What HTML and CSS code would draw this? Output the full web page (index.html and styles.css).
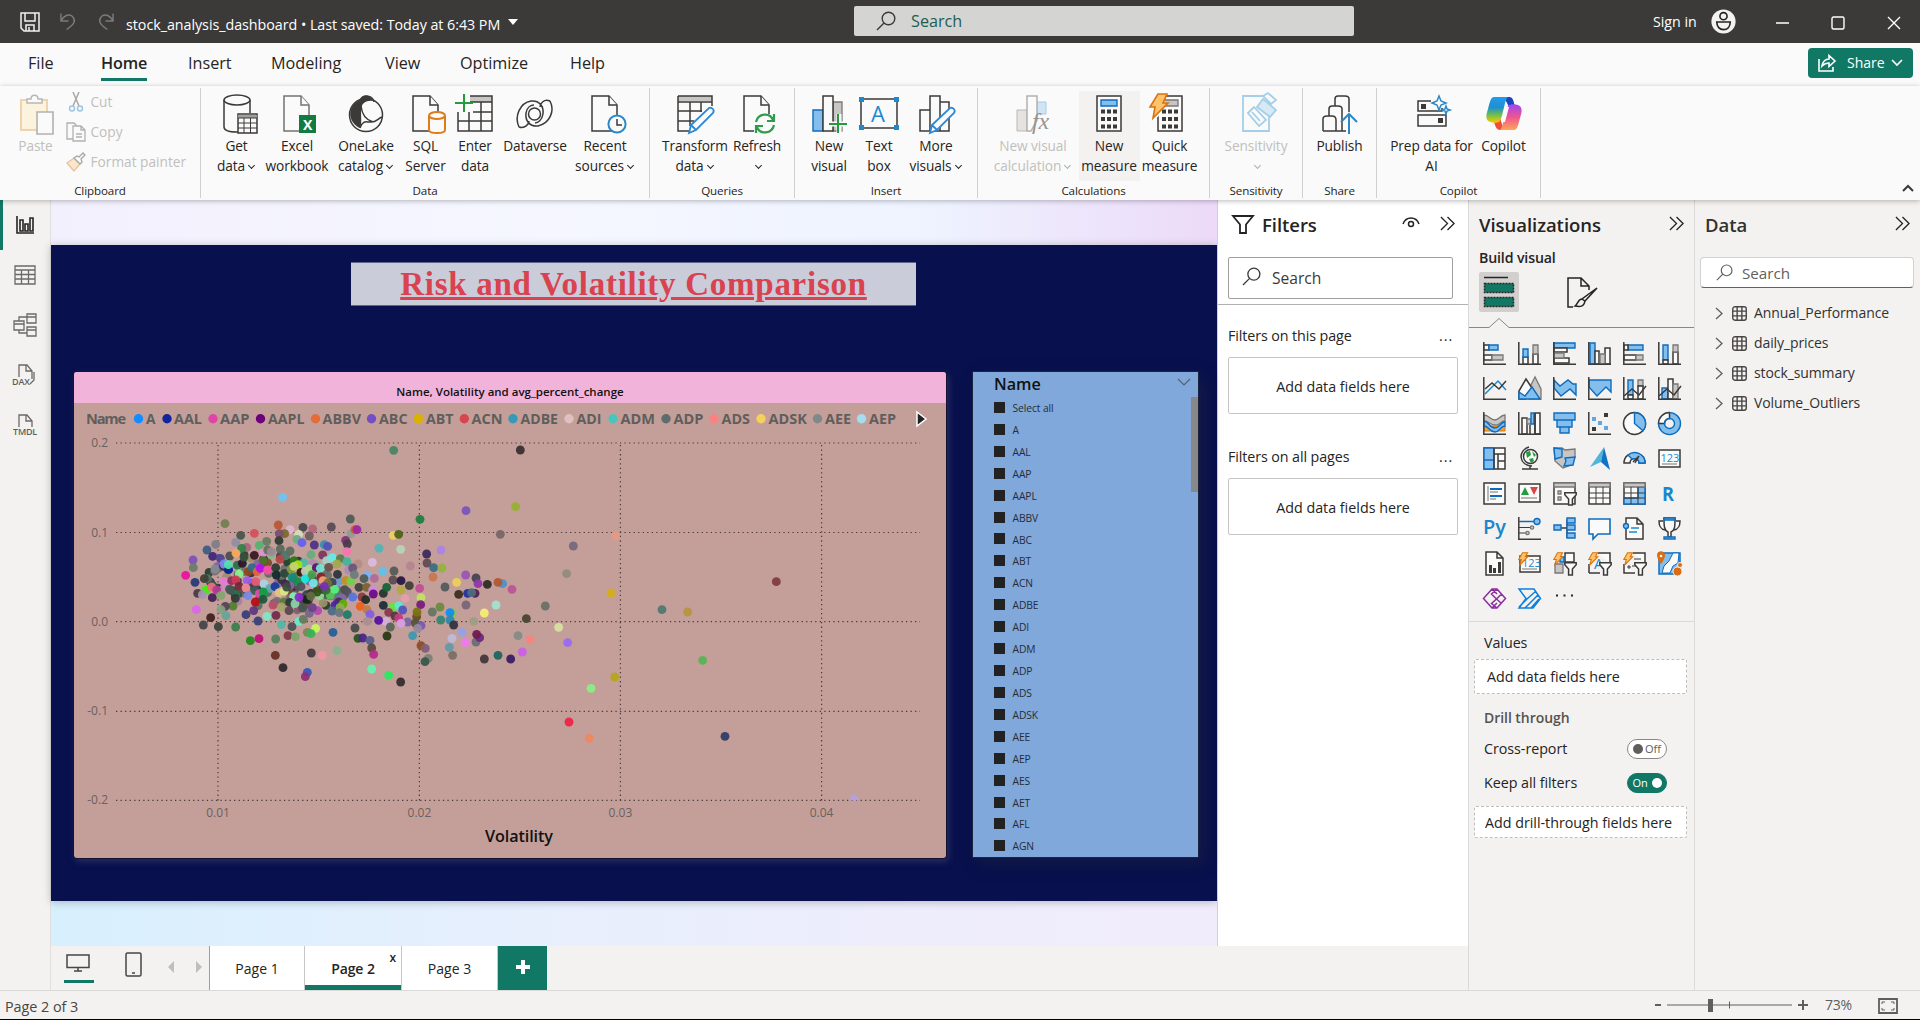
FILE: index.html
```html
<!DOCTYPE html>
<html lang="en">
<head>
<meta charset="utf-8">
<title>stock_analysis_dashboard</title>
<link rel="stylesheet" href="styles.css">
</head>
<body>
<svg class="defs" width="0" height="0">
  <symbol id="mag" viewBox="0 0 20 20"><circle cx="12.5" cy="7.5" r="6.3"/><path d="M8 12L1 19"/></symbol>
  <symbol id="dbl" viewBox="0 0 16 16"><path d="M1 1l7 7-7 7M8 1l7 7-7 7"/></symbol>
  <symbol id="doc" viewBox="0 0 36 40"><path class="w" d="M5 2h17l8 9v26H5z"/><path class="w" d="M22 2v9h8"/></symbol>
  <symbol id="bolt" viewBox="0 0 12 15"><path d="M5 .6h5.4L8 5h2.8L2 14l1.6-6H.8z" fill="#ffc36b" stroke="#d9730d" stroke-width="1.2"/></symbol>
  <symbol id="ax" viewBox="0 0 23 23"><path class="k" d="M.8 0v22.2H23"/></symbol>
  <symbol id="fun" viewBox="0 0 13 14"><path class="w" d="M.8.8h11.4v2L8.4 7v6H4.6V7L.8 2.8z"/></symbol>
  <symbol id="tbl" viewBox="0 0 14 14"><rect x=".7" y=".7" width="12.6" height="12.6" rx="2"/><path d="M.7 4.8h12.6M.7 9.2h12.6M4.8.7v12.6M9.2.7v12.6"/></symbol>
</svg>

<header class="titlebar">
  <svg class="ti save" viewBox="0 0 20 20"><path d="M1 1h18v18H4l-3-3zM5 1v8h10V1M6 19v-6h8v6M9 15v4"/></svg>
  <svg class="ti dim undo" viewBox="0 0 18 19"><path d="M1 1v8h8M1 9c3-6 8-8 12-5 4 4 3 8-6 14"/></svg>
  <svg class="ti dim redo" viewBox="0 0 18 19"><path d="M17 1v8H9M17 9C14 3 9 1 5 4c-4 4-3 8 6 14"/></svg>
  <span class="doc-name">stock_analysis_dashboard • Last saved: Today at 6:43 PM</span>
  <i class="caret"></i>
  <div class="top-search"><svg class="ln"><use href="#mag"/></svg><span>Search</span></div>
  <span class="signin">Sign in</span>
  <svg class="avatar" viewBox="0 0 26 26"><circle cx="13" cy="13" r="12.6" fill="#f3f2f1"/><g fill="none" stroke="#252423" stroke-width="1.7"><circle cx="13" cy="7.5" r="3.7"/><path d="M6 13.5h14c0 5-3 8-7 8s-7-3-7-8z"/></g></svg>
  <svg class="win" viewBox="0 0 124 14"><path d="M0 7h13M112 1l12 12M124 1l-12 12"/><rect x="56" y="1" width="12" height="12" rx="1.5"/></svg>
</header>

<nav class="menu">
  <span style="width:73px">File</span><span style="width:87px" class="on"><b>Home</b></span><span style="width:83px">Insert</span><span style="width:114px">Modeling</span><span style="width:75px">View</span><span style="width:110px">Optimize</span><span>Help</span>
  <button class="share"><svg viewBox="0 0 20 18"><path d="M2 5v12h14v-4M5 12c1-5 4-7 7-7V1.500l6 5.500-6 5.500V9c-3 0-5 1-7 3z"/></svg>Share<svg class="chev" viewBox="0 0 12 8"><path d="M1 1l5 5 5-5"/></svg></button>
</nav>

<section class="ribbon">
  <div class="group clip">
    <div class="btns">
      <div class="btn off"><svg viewBox="0 0 36 40"><path d="M3 6h26v30H3z" fill="#fcf3df" stroke="#eed3ae" stroke-width="2"/><path d="M9 9V5h4c0-5 7-5 7 0h4v4z" fill="#fafafa" stroke="#b9b7b5" stroke-width="1.500"/><path d="M19 18h16v22H19z" fill="#fafafa" stroke="#b3b1af" stroke-width="1.600"/></svg>Paste</div>
      <ul class="small">
        <li><svg viewBox="0 0 20 20"><path d="M7 0l6 14M13 0L7 14" stroke="#a9a7a5" fill="none" stroke-width="1.500"/><circle cx="6" cy="16.500" r="2.500" fill="none" stroke="#9cc6e4" stroke-width="1.500"/><circle cx="14" cy="16.500" r="2.500" fill="none" stroke="#9cc6e4" stroke-width="1.500"/></svg>Cut</li>
        <li><svg viewBox="0 0 20 20" fill="#fafafa" stroke="#b3b1af" stroke-width="1.300"><path d="M1 1h7l3 3v13H1z"/><path d="M7 4h8l4 4v11H7zM15 4v4h4M10 12h6M10 15h6"/></svg>Copy</li>
        <li><svg viewBox="0 0 20 20" stroke-width="1.300"><path d="M1 11l7-5 6 6-6 7z" fill="#fbe6cd" stroke="#e5c49c"/><path d="M8 6l3-2 2 1 4-4 2 2-4 4 1 3-2 2z" fill="#fafafa" stroke="#a9a7a5"/></svg>Format painter</li>
      </ul>
    </div><h6>Clipboard</h6>
  </div>
  <div class="group" style="width:449px">
    <div class="btns">
      <div class="btn" style="width:57px"><svg viewBox="0 0 36 40"><path class="w" d="M5 6v27c0 3 5 5 13 5h5M31 19V6"/><ellipse class="w" cx="18" cy="6" rx="13" ry="5"/><path class="w" d="M19 20h19v19H19z"/><path d="M19 21h19v3H19z" fill="#a19f9d"/><path class="k th" d="M19 24h19M19 29h19M19 34h19M25 24v15M31.500 24v15"/></svg>Get<br>data<i></i></div>
      <div class="btn" style="width:64px"><svg viewBox="0 0 36 40"><g class="soft"><use href="#doc"/></g><path d="M20 21h17v18H20z" fill="#107c41"/><text x="24" y="35.500" fill="#fff" font-size="14" font-weight="700">X</text></svg>Excel<br>workbook</div>
      <div class="btn" style="width:74px"><svg viewBox="0 0 36 40"><circle class="k" cx="18" cy="21" r="16.500"/><path d="M12 6c4-7 11-5 13 1-6-1-12 2-12 9 0 8 1 14-1 18C0 29-2 12 12 6z" fill="#3b3a39"/><path class="k" d="M12 6c4-7 13-4 14 2M13 12c1 9 5 14 12 16M12 34c3-8 6-6 10-6 6 1 7-3 12-5"/></svg>OneLake<br>catalog<i></i></div>
      <div class="btn" style="width:45px"><svg viewBox="0 0 36 40"><use href="#doc"/><path d="M21 22v14c0 4 16 4 16 0V22" fill="#fafafa" stroke="#e07b1a" stroke-width="2"/><ellipse cx="29" cy="21.500" rx="8" ry="3.500" fill="#fafafa" stroke="#e07b1a" stroke-width="2"/></svg>SQL<br>Server</div>
      <div class="btn" style="width:54px"><svg viewBox="0 0 36 40"><path d="M13 2h22v6H13z" fill="#c8c6c4"/><path class="k" d="M13 2h22v35H1V18M13 8h22M16 18h19M1 27h34M12 18v19M24 8v29"/><path d="M7 0v18M-2 9h18" stroke="#259b3e" stroke-width="2"/></svg>Enter<br>data</div>
      <div class="btn" style="width:66px"><svg viewBox="0 0 36 40"><g class="k"><circle cx="17.500" cy="20" r="6"/><path d="M33 7c-6-3-10 3-10 6M33 7c5 10 0 22-12 25-8 1-13-5-12-13 1-6 5-8 8-8M2 33c6 2 10-3 10-6M2 33C-3 22 3 9 14 7c8-1 13 5 12 13-1 6-5 9-8 9"/></g></svg>Dataverse</div>
      <div class="btn" style="width:74px"><svg viewBox="0 0 36 40"><use href="#doc"/><circle cx="30" cy="30" r="8.600" fill="#fafafa" stroke="#2b88c8" stroke-width="2"/><path class="k" d="M30 25v6h5"/></svg>Recent<br>sources<i></i></div>
    </div><h6>Data</h6>
  </div>
  <div class="group" style="width:145px">
    <div class="btns">
      <div class="btn" style="width:70px"><svg viewBox="0 0 36 40"><path d="M1 2h34v5H1z" fill="#c8c6c4"/><path class="k" d="M1 2h34v10M1 2v35h11M1 8h34M1 17h24M1 27h16M13 8v24M24 8v10"/><path class="pen" d="M12 39l2-8 18-17c3-1 6 2 4 5L19 36zM14 31l5 5"/></svg>Transform<br>data<i></i></div>
      <div class="btn" style="width:54px"><svg viewBox="0 0 36 40"><use href="#doc"/><path d="M15 20h24v22H15z" fill="#fafafa"/><path d="M17 28c2-9 14-10 17-2M35 20v7h-7M35 31c-2 9-14 10-17 2M17 39v-7h7" fill="none" stroke="#2f9b4c" stroke-width="2.200"/></svg>Refresh<br><i></i></div>
    </div><h6>Queries</h6>
  </div>
  <div class="group" style="width:183px">
    <div class="btns">
      <div class="btn" style="width:56px"><svg viewBox="0 0 36 40"><path class="b" d="M2 16h10v21H2z"/><path class="g" d="M22 8h9v29h-9z"/><path class="w" d="M12 2h10v35H12z"/><path d="M18 30h20M28 20v20" stroke="#fafafa" stroke-width="5"/><path d="M18 30h18M27 20v19" stroke="#259b3e" stroke-width="2"/></svg>New<br>visual</div>
      <div class="btn" style="width:44px"><svg viewBox="0 0 36 40"><path class="k" d="M0 5h36v29H0z"/><path d="M-2 3h5v5h-5zM33 3h5v5h-5zM-2 31h5v5h-5zM33 31h5v5h-5z" fill="#1a8ad0"/><text x="10" y="28" font-size="22" fill="#1a8ad0">A</text></svg>Text<br>box</div>
      <div class="btn" style="width:70px"><svg viewBox="0 0 36 40"><path class="w" d="M2 16h10v21H2zM22 8h9v29h-9zM12 2h10v35H12z"/><path class="pen" d="M12 39l2-8 18-17c3-1 6 2 4 5L19 36zM14 31l5 5"/></svg>More<br>visuals<i></i></div>
    </div><h6>Insert</h6>
  </div>
  <div class="group" style="width:232px">
    <div class="btns">
      <div class="btn off" style="width:91px"><svg viewBox="0 0 36 40"><path d="M2 16h10v21H2z" fill="#e5e3e1" stroke="#b9b7b5"/><path d="M22 8h9v12h-9z" fill="#cfe4f4" stroke="#a9cce6"/><path d="M12 2h10v24l-6 11h-4z" fill="#fafafa" stroke="#b3b1af" stroke-width="1.500"/><text x="17" y="35" font-size="24" font-family="Liberation Serif" font-style="italic" fill="#979593">fx</text></svg>New visual<br>calculation<i></i></div>
      <div class="btn hot" style="width:61px"><svg viewBox="0 0 36 40"><path class="w" d="M6 2h24v35H6z"/><path class="b" d="M10 6h16v6H10z"/><path d="M10 17.500h16M10 25h16M10 32.500h16" stroke="#3b3a39" stroke-width="4" stroke-dasharray="4 2"/></svg>New<br>measure</div>
      <div class="btn" style="width:60px"><svg viewBox="0 0 36 40"><path class="w" d="M6 2h24v35H6z"/><path class="g" d="M10 6h16v6H10z"/><path d="M10 17.500h16M10 25h16M10 32.500h16" stroke="#3b3a39" stroke-width="4" stroke-dasharray="4 2"/><path d="M6 1H-4v23l10-1 8-14z" fill="#fafafa"/><path d="M6 0h9l-4 9h5L1 24l2-11h-5z" fill="#ffc36b" stroke="#d9730d" stroke-width="1.600"/></svg>Quick<br>measure</div>
    </div><h6>Calculations</h6>
  </div>
  <div class="group" style="width:93px">
    <div class="btns"><div class="btn off" style="width:80px"><svg viewBox="0 0 36 40"><g fill="#fafafa" stroke="#a5cfe8" stroke-width="1.800"><path d="M5 2h26v35H5z"/><path d="M10 19l6-6 12 13-7 6z"/><path d="M19 13l6-8 13 11-6 7z" fill="#d6e9f5"/><path d="M25 2l5-3 8 7-5 4zM14 18l8 9"/></g></svg>Sensitivity<br><i></i></div></div><h6>Sensitivity</h6>
  </div>
  <div class="group" style="width:74px">
    <div class="btns"><div class="btn"><svg viewBox="0 0 36 40"><g class="k"><path d="M2 37V25c0-3 2-3 4-3h5c3 0 4 1 4 4v11M8 22v-7c0-2 1-3 3-3h6c2 0 4 1 4 3v22M14 12V5c0-2 1-3 3-3h7c2 0 4 1 4 3v13M2 37h23"/></g><path d="M28 40V20M20 28l8-8 8 8" fill="none" stroke="#2b88c8" stroke-width="2"/></svg>Publish</div></div><h6>Share</h6>
  </div>
  <div class="group" style="width:164px">
    <div class="btns">
      <div class="btn" style="width:90px"><svg viewBox="0 0 36 40"><path class="k" d="M17 7H4v10h24v-3M4 21h28v11H4z"/><path d="M7 10h5v5H7zM24 24h5v5h-5z" fill="#3b3a39"/><path d="M25 2l2 5 5 2-5 2-2 5-2-5-5-2 5-2zM32 12l1 3 3 1-3 1-1 3-1-3-3-1 3-1z" fill="#fafafa" stroke="#2b88c8" stroke-width="1.500"/></svg>Prep data for<br>AI</div>
      <div class="btn" style="width:54px"><svg viewBox="0 0 36 40"><defs><linearGradient id="ca" x2="0" y2="1"><stop stop-color="#1f9cf0"/><stop offset=".4" stop-color="#1f8fd0"/><stop offset=".7" stop-color="#6fbf4a"/><stop offset="1" stop-color="#ffc800"/></linearGradient><linearGradient id="cb" x2="0" y2="1"><stop stop-color="#a045f0"/><stop offset=".5" stop-color="#ef5590"/><stop offset="1" stop-color="#ffa555"/></linearGradient></defs><path d="M18 3h5c3 0 4 2 5 6l1 4h-6z" fill="#1746c0"/><path d="M18 36h-4c-3 0-5-3-6-9l6-3z" fill="#ee4f35"/><path d="M8 3h14c-4 3-5 22-9 25-2 1-6 1-9 0-5-2-4-7-2-13C4 7 5 3 8 3z" fill="url(#ca)"/><path d="M28 36H14c4-3 5-22 9-25 2-1 6-1 9 0 5 2 4 7 2 13-2 8-3 12-6 12z" fill="url(#cb)"/><path d="M20 13h3l-4 15h-4z" fill="#fafafa"/></svg>Copilot</div>
    </div><h6>Copilot</h6>
  </div>
  <svg class="fold" viewBox="0 0 12 8"><path d="M1 7l5-5 5 5"/></svg>
</section>

<main>
  <aside class="rail">
    <div class="sel"><svg viewBox="0 0 24 24"><path d="M4 3v17h17M7 7h3v11H7zM12 11h3v7h-3zM17 5h3v13h-3z"/></svg></div>
    <div><svg viewBox="0 0 24 24"><path d="M2 3h20v18H2zM2 7h20M2 11.500h20M2 16h20M8.500 7v14M15.500 7v14"/></svg></div>
    <div><svg viewBox="0 0 24 24"><path d="M1 8h10v9H1zM1 11h10M14 1h9v9h-9zM14 4h9M14 14h9v9h-9zM14 17h9M6 8V4h8M6 17v3h8"/></svg></div>
    <div><svg viewBox="0 0 24 24"><path d="M6 14V2h8l5 6v8M13 2v6h6M21 9v8l-4 4"/><text x="-1" y="21.500">DAX</text></svg></div>
    <div><svg viewBox="0 0 24 24"><path d="M6 14V2h8l5 6v6M13 2v6h6"/><text x="0" y="21.500">TMDL</text></svg></div>
  </aside>

  <section class="work">
    <div class="canvas">
      <div class="page">
        <h1>Risk and Volatility Comparison</h1>
        <div class="visuals">
          <article class="scatter">
            <h2>Name, Volatility and avg_percent_change</h2>
            <svg id="chart" viewBox="0 31 872 455" width="872" height="455">
              <g id="legend"></g>
              <path d="M843 40l9 7-9 7z" fill="#222" stroke="#fff" stroke-width="1.500"/>
              <g id="grid"></g>
              <clipPath id="plot"><rect x="40" y="60" width="820" height="368.500"/></clipPath>
              <g clip-path="url(#plot)"><g id="dots" transform="translate(86 118) scale(.33333)"></g></g>
              <text class="axis-title" x="411" y="470" textLength="68">Volatility</text>
            </svg>
          </article>
          <article class="slicer">
            <h3>Name<svg viewBox="0 0 14 8"><path d="M1 1l6 6 6-6"/></svg></h3>
            <ul><li>Select all<li>A<li>AAL<li>AAP<li>AAPL<li>ABBV<li>ABC<li>ABT<li>ACN<li>ADBE<li>ADI<li>ADM<li>ADP<li>ADS<li>ADSK<li>AEE<li>AEP<li>AES<li>AET<li>AFL<li>AGN</ul>
            <i class="thumb"></i>
          </article>
        </div>
      </div>
    </div>
    <aside class="filters">
      <div class="phead"><svg class="funnel" viewBox="0 0 22 19"><path d="M1 1h20l-7 8.500V18H8V9.500z"/></svg><h4>Filters</h4><svg class="eye" viewBox="0 0 18 12"><path d="M1 7c3-8 13-8 16 0"/><circle cx="9" cy="7" r="2.500"/></svg><svg class="dbl"><use href="#dbl"/></svg></div>
      <div class="fsearch"><svg class="ln"><use href="#mag"/></svg>Search</div>
      <section><p>Filters on this page<em>...</em></p><div class="well">Add data fields here</div></section>
      <section><p>Filters on all pages<em>...</em></p><div class="well">Add data fields here</div></section>
    </aside>
    <footer class="tabs">
      <div class="dev"><svg viewBox="0 0 24 18"><path d="M1 1h22v12.500H1zM12 14v3M8 17h8"/></svg></div>
      <svg class="phone" viewBox="0 0 17 25"><rect x="1" y="1" width="15" height="23" rx="1.500"/><path d="M7 21h3"/></svg>
      <i class="pl"></i><i class="pr"></i>
      <span class="tab first">Page 1</span><span class="tab cur">Page 2<u>x</u></span><span class="tab">Page 3</span><span class="add"></span>
    </footer>
  </section>

  <aside class="viz">
    <div class="phead"><h4>Visualizations</h4><svg class="dbl"><use href="#dbl"/></svg></div>
    <h5>Build visual</h5>
    <div class="modes">
      <svg class="tile" viewBox="0 0 40 40"><path d="M5 5.500h24" stroke="#252423" stroke-width="1.500"/><path d="M5.500 11.500h29v9h-29zM5.500 25.500h29v9h-29z" fill="#117865" stroke="#252423" stroke-width="1.500" stroke-dasharray="2 1"/></svg>
      <svg class="fmt" viewBox="0 0 32 32"><path d="M6 30H1V1h13l8 8v4M14 1v8h8M30 11L18 24l-3-2zM15 22c-4 0-4 5-7 7 5 1 9 1 10-5"/></svg>
    </div>
    <svg class="notch" viewBox="0 0 225 10" height="10"><path d="M0 9.500h20l10-9 10 9h185"/></svg>
    <div class="gallery">
      <svg><use href="#ax"/><path class="w" d="M1 3h5v5H1zM1 13h8v5H1z"/><path class="b" d="M6 3h9v5H6z"/><path class="g" d="M9 13h11v5H9z"/></svg>
      <svg><use href="#ax"/><path class="w" d="M5 15h5v7H5zM15 12h5v10h-5z"/><path class="b" d="M5 7h5v8H5z"/><path class="g" d="M15 3h5v9h-5z"/></svg>
      <svg><path class="b" d="M1 1h21v5H1z"/><path class="w" d="M1 6h13v4H1zM1 16h15v5H1z"/><path class="g" d="M1 11h10v5H1z"/><use href="#ax"/></svg>
      <svg><path class="b" d="M2 1h5v21H2z"/><path class="w" d="M7 9h4v13H7zM17 6h5v16h-5z"/><path class="g" d="M12 12h5v10h-5z"/><use href="#ax"/></svg>
      <svg><path class="b" d="M5 3h15v5H5z"/><path class="w" d="M1 3h4v5H1zM1 13h12v5H1z"/><path class="g" d="M13 13h7v5h-7z"/><use href="#ax"/></svg>
      <svg><path class="b" d="M5 3h5v15H5z"/><path class="w" d="M5 18h5v4H5zM15 10h5v12h-5z"/><path class="g" d="M15 3h5v7h-5z"/><use href="#ax"/></svg>

      <svg><use href="#ax"/><path d="M2 17L15 4l8 9" fill="none" stroke="#1a8ad0" stroke-width="1.500"/><path class="k" d="M2 12l7-6 7 6 7-8"/></svg>
      <svg><path class="g" d="M11 12l6-12 6 12v10H11z"/><path class="w" d="M1 14L8 2l8 12-8 8H1z"/><path class="b" d="M1 15l6 4 7-9 8 12H1z"/></svg>
      <svg><path class="b" d="M1 3l6 6 8-6 5 4h3v11l-6-6-9 7-7-8z"/><use href="#ax"/></svg>
      <svg><path class="b" d="M1 3h22v12l-5-5-9 9-8-9z"/><use href="#ax"/></svg>
      <svg><path class="b" d="M5 3h5v15H5z"/><path class="g" d="M15 3h5v6h-5z"/><path class="w" d="M5 18h5v4H5zM15 9h5v13h-5z"/><path class="k" d="M1 19l8-7 7 6 7-9"/><use href="#ax"/></svg>
      <svg><path class="b" d="M4 11h6v11H4z"/><path class="w" d="M10 2h5v20h-5z"/><path class="g" d="M15 7h5v15h-5z"/><path class="k" d="M1 19l8-7 7 6 7-9"/><use href="#ax"/></svg>

      <svg><path class="g" d="M1 3c5 0 6 5 11 5 4 0 5-5 10-5v6c-5 0-5 5-10 4C7 13 6 9 1 9z"/><path d="M1 14h21v5H1z" fill="#f0a03c" stroke="#d9730d"/><path class="b" d="M1 9c5 0 5 7 11 7 5 0 5-6 10-6v4c-5 0-5 6-10 6C6 20 6 14 1 14z"/><use href="#ax"/></svg>
      <svg><path class="w" d="M4 6h5v16H4zM17 1h5v21h-5z"/><path class="g" d="M9 7h4v5H9z"/><path class="b" d="M13 1h3v11h-3z"/><path class="k" d="M12 13v9M17 1v21"/><use href="#ax"/></svg>
      <svg><path class="b" d="M1 1h21v7H1zM4 8h15v7H4zM7 15h9v6H7z"/></svg>
      <svg><use href="#ax"/><path d="M16 1h4v4h-4zM4 15h4v4H4z" fill="#3b3a39"/><path d="M4 5h4v4H4zM10 9h4v4h-4zM16 14h4v4h-4z" fill="#5fa8e3"/></svg>
      <svg><circle class="w" cx="11.500" cy="11.500" r="11"/><path class="b" d="M11.500.7a11 11 0 018.500 18l-8.500-7.200z"/></svg>
      <svg><circle cx="11.500" cy="11.500" r="8.300" fill="none" stroke="#83beec" stroke-width="6"/><path class="w" d="M.5 11.500a11 11 0 0111-11v6a5 5 0 00-5 5z"/><g fill="none" stroke="#0f6cbd" stroke-width="1.400"><path d="M11.500.6a11 11 0 11-11 11"/><circle cx="11.500" cy="11.500" r="5"/></g></svg>

      <svg><path class="w" d="M1 1h21v21H1z"/><path class="b" d="M1 1h10v12H1zM1 13h10v9H1z"/><path class="k" d="M11 7h11M15 7v15M15 14h7M11 1v21"/></svg>
      <svg><circle class="w" cx="12.500" cy="9.500" r="7"/><path d="M8 5l4-1 1 4-4 3zM14 4l4 4-2 2zM11 12l4-1 1 3-3 2z" fill="#259b3e"/><path class="k" d="M11 0C0 3 0 18 14 19M12 19v3M4 22h16"/></svg>
      <svg><path class="g" d="M1 1h8l3 2 10-1v8l-4 8-8 3-8-7z"/><path class="b" d="M1 1l8 1v8l-7 2zM12 11l10-1-2 8-9 1 2-5z"/></svg>
      <svg><path d="M16 0L2 20l11-5z" fill="#50b4dc"/><path d="M16 0l6 23-9-8z" fill="#1273c4"/></svg>
      <svg><path class="w" d="M1 16C1 3 22 3 22 16h-6c0-6-9-6-9 0z"/><path class="b" d="M5 8c6-5 17-2 17 8h-6c0-4-4-5-7-4z"/><path class="k" d="M10 15l6-6-4 7"/></svg>
      <svg><path class="w" d="M1 3h21v17H1z"/><path d="M4 17h15" stroke="#797775"/><text x="2.500" y="14.500" font-size="11" fill="#1a8ad0">123</text></svg>

      <svg><path class="w" d="M1 1h21v21H1z"/><path d="M5 4v15M7 10h8M7 17h6" stroke="#797775"/><path d="M7 7h12M7 14h12" stroke="#0f6cbd" stroke-width="2"/></svg>
      <svg><path class="w" d="M1 2h21v18H1z"/><path d="M3 13l4-8 4 8z" fill="#259b3e"/><path d="M12 5h8l-4 8z" fill="#e04343"/><path d="M3 16h16" stroke="#797775"/></svg>
      <svg><path class="w" d="M1 1h21v21H1z"/><path class="g" d="M1 1h21v4H1zM5 9h3v3H5zM5 15h3v3H5z"/><use href="#fun" x="11" y="10" width="13" height="14"/></svg>
      <svg><path class="w" d="M1 1h21v21H1z"/><path class="g" d="M1 1h21v4H1z"/><path class="k th" d="M1 11h21M1 16h21M8 5v17M15 5v17"/></svg>
      <svg><path class="w" d="M1 1h21v21H1z"/><path class="b" d="M15 5h7v17H1v-6h14z"/><path class="g" d="M1 1h21v4H1z"/><path class="k th" d="M1 11h21M1 16h21M8 5v17M15 5v17"/></svg>
      <svg><text x="4" y="18.500" font-size="19" font-weight="700" fill="#1a86cc" textLength="12" lengthAdjust="spacingAndGlyphs">R</text></svg>

      <svg><text x="0" y="17" font-size="20" font-weight="600" fill="#1a86cc" textLength="23" lengthAdjust="spacingAndGlyphs">Py</text></svg>
      <svg><use href="#ax"/><path d="M1 4.500h15" stroke="#0f6cbd" stroke-width="1.500"/><circle class="b" cx="19" cy="4.500" r="3"/><path class="k th" d="M1 10.500h11M1 16h7"/><circle class="g" cx="14" cy="10.500" r="1.700"/><circle class="g" cx="9.500" cy="16" r="1.700"/></svg>
      <svg><path class="k" d="M8 11h6M20 3h-6v17h5"/><path class="b" d="M1 8h7v5H1zM14 1h8v5h-8zM14 8h8v5h-8zM14 16h8v5h-8z"/></svg>
      <svg><path d="M1 2h21v15H10l-5 5v-5H1z" fill="#fafafa" stroke="#0f6cbd" stroke-width="1.600"/></svg>
      <svg><path class="w" d="M3 1h11l6 6v15H3zM14 1v6h6"/><circle class="b" cx="3" cy="9" r="2.500"/><path d="M8 11h8M6 15h8" stroke="#1a8ad0" stroke-width="1.500"/></svg>
      <svg><path class="w" d="M5 4H1c0 6 2 8 6 9M18 4h4c0 6-2 8-6 9M6 1h11c0 9 0 12-4 14v5h-3v-5C6 13 6 9 6 1z"/><path class="b" d="M6 1h11v2H6zM6 20h11v2H6z"/></svg>

      <svg><path class="w" d="M3 0h11l6 6v17H3zM14 0v6h6"/><path d="M6 13h3v8H6zM10 16h3v5h-3zM15 10h3v11h-3z" fill="#3b3a39"/></svg>
      <svg><path class="w" d="M2 4h20v16H2z"/><path d="M4 17h15" stroke="#797775"/><text x="4" y="15" font-size="11" fill="#1a8ad0">123</text><use href="#bolt" width="11" height="14"/></svg>
      <svg><path class="g" d="M2 12h8v9H2z"/><path class="w" d="M12 1h9v9h-9z"/><path class="b" d="M7 5h4v5H7z"/><use href="#fun" x="11" y="10" width="13" height="14"/><use href="#bolt" width="11" height="14"/></svg>
      <svg><path class="w" d="M1 21h11M1 12v9M10 1h12v10"/><text x="6" y="17" font-size="15" fill="#1a8ad0">A</text><use href="#fun" x="11" y="10" width="13" height="14"/><use href="#bolt" width="11" height="14"/></svg>
      <svg><path class="w" d="M1 12v9h11M10 1h12v10"/><path class="k th" d="M11 7h7M5 14h2v2H5zM9 14h4"/><use href="#fun" x="11" y="10" width="13" height="14"/><use href="#bolt" width="11" height="14"/></svg>
      <svg><path d="M1 1h21v21H1z" fill="#83beec" stroke="#0f6cbd" stroke-width="1.500"/><path d="M15 1l-4 8-5 5-2 7h8l3-7 5-3 1-10z" fill="#fafafa" stroke="#0f6cbd"/><path d="M-1 3c0-5 8-5 8 0 0 4-4 9-4 9s-4-5-4-9z" fill="#dd6b10"/><circle cx="3" cy="4" r="1.300" fill="#fff"/><circle cx="19.500" cy="19.500" r="4.500" fill="#dd6b10" stroke="#f3f2f1"/><circle cx="22" cy="13" r="2.500" fill="#dd6b10" stroke="#f3f2f1"/></svg>

      <svg><g fill="none" stroke="#8a2f9b" stroke-width="1.500"><path d="M9 2h5l8.500 9.500L14 21H9L.5 11.500zM14 2L8.500 7l5 5 5-5M9 2l5 5M13.500 12l-5 4.500L14 21M13.500 12l5 4.500M9 21l5-5"/></g></svg>
      <svg><g fill="none" stroke="#0f7fdc" stroke-width="1.500"><path d="M1 2h15l6.500 9.500L15 21H1l7-9.500zM9 12L18 4M1 20l9-9M7 21L20 8M13 21l8-9"/></g></svg>
      <svg><path d="M3 8.500h2M10.500 8.500h2M18 8.500h2" stroke="#252423" stroke-width="2"/></svg>
    </div>
    <div class="fields">
      <label>Values</label>
      <div class="dash v">Add data fields here</div>
      <label class="sb">Drill through</label>
      <div class="row">Cross-report<span class="tg"><i></i>Off</span></div>
      <div class="row k2">Keep all filters<span class="tg yes">On<i></i></span></div>
      <div class="dash d">Add drill-through fields here</div>
    </div>
  </aside>

  <aside class="data">
    <div class="phead"><h4>Data</h4><svg class="dbl"><use href="#dbl"/></svg></div>
    <div class="dsearch"><svg class="ln"><use href="#mag"/></svg>Search</div>
    <ul>
      <li><svg class="ar" viewBox="0 0 8 12"><path d="M1 .5L7 6l-6 5.500"/></svg><svg class="tb"><use href="#tbl"/></svg>Annual_Performance</li>
      <li><svg class="ar" viewBox="0 0 8 12"><path d="M1 .5L7 6l-6 5.500"/></svg><svg class="tb"><use href="#tbl"/></svg>daily_prices</li>
      <li><svg class="ar" viewBox="0 0 8 12"><path d="M1 .5L7 6l-6 5.500"/></svg><svg class="tb"><use href="#tbl"/></svg>stock_summary</li>
      <li><svg class="ar" viewBox="0 0 8 12"><path d="M1 .5L7 6l-6 5.500"/></svg><svg class="tb"><use href="#tbl"/></svg>Volume_Outliers</li>
    </ul>
  </aside>
</main>

<footer class="status">
  <span class="pg">Page 2 of 3</span>
  <svg class="zoom" viewBox="0 0 154 20" width="154" height="20"><path d="M1 10h6M144 10h10M149 5v10" stroke-width="2"/><path d="M13 10h125M75.500 6.500v7"/><path d="M54 4h5v13h-5z" fill="#605e5c" stroke="none"/></svg>
  <span class="pct">73%</span>
  <svg class="fit" viewBox="0 0 20 16"><path d="M1 1h18v14H1z"/><path d="M4 6V4h3M13 4h3v2M4 10v2h3M13 12h3v-2" stroke-width="1"/></svg>
</footer>
<script src="chart.js"></script>
</body>
</html>
```
FILE: styles.css
```css
* { box-sizing: border-box; margin: 0; padding: 0; }
body {
  width: 1920px; height: 1020px; overflow: hidden;
  display: flex; flex-direction: column;
  font: 13.7px/20px "Open Sans", "Noto Sans", sans-serif;
  color: #252423; background: #f3f2f1;
  border-bottom: 1px solid #000;
}
ul { list-style: none; }
svg { display: block; overflow: visible; flex: none; }
.defs { position: absolute; }
button { font: inherit; border: 0; }

.k { fill: none; stroke: #3b3a39; stroke-width: 1.5; }
.k.th { stroke-width: 1; }
.w { fill: #fafafa; stroke: #3b3a39; stroke-width: 1.5; }
.b { fill: #83beec; stroke: #0f6cbd; stroke-width: 1.4; }
.g { fill: #c8c6c4; stroke: #797775; stroke-width: 1.3; }
.pen { fill: #fafafa; stroke: #2b88d8; stroke-width: 1.8; }
.ln { fill: none; stroke: #3b3a39; stroke-width: 1.4; }

/* title bar */
.titlebar { height: 43px; background: #3b3a38; color: #fff; display: flex; align-items: center; flex: none; padding-left: 20px; }
.ti { fill: none; stroke: #f3f2f1; stroke-width: 1.5; }
.save { width: 20px; height: 20px; }
.dim { width: 17px; height: 19px; stroke: #7d7b79; }
.undo { margin-left: 20px; }
.redo { margin-left: 20px; }
.doc-name { width: 374px; margin: 6px 0 0 12px; font-size: 14.3px; letter-spacing: -.04px; white-space: nowrap; }
.caret { margin-left: 8px; border: 5.5px solid transparent; border-top: 6px solid #fff; border-bottom: 0; }
.top-search { width: 500px; height: 30px; margin-left: 336px; margin-top: -1px; background: #d4d4d2; border-radius: 2px; display: flex; align-items: center; padding-left: 22px; font-size: 16.2px; color: #1f5c4d; }
.top-search svg { width: 20px; height: 20px; margin-right: 15px; }
.signin { margin-left: 299px; width: 58px; margin-top: 1px; font-size: 14.2px; }
.avatar { width: 25px; height: 25px; }
.win { width: 124px; height: 14px; margin: 3px 0 0 40px; fill: none; stroke: #fff; stroke-width: 1.4; }

/* menu */
.menu { height: 43px; flex: none; background: #fafafa; display: flex; padding-left: 28px; font-size: 16.2px; line-height: 40px; }
.menu b { display: inline-block; height: 38px; font-weight: 600; border-bottom: 3px solid #117865; letter-spacing: -.2px; }
.share { margin: 5px 7px 0 auto; width: 105px; height: 30px; border-radius: 4px; background: #117865; color: #fff; font-size: 14px; display: flex; align-items: center; padding-left: 9px; }
.share svg { width: 20px; height: 18px; fill: none; stroke: #fff; stroke-width: 1.6; margin-right: 10px; }
.share .chev { width: 12px; height: 8px; margin: 0 0 0 6px; }

/* ribbon */
.ribbon { height: 114px; flex: none; background: #fafafa; display: flex; position: relative; z-index: 2; box-shadow: 0 1px 5px rgba(0,0,0,.28); padding-top: 2px; }
.group { height: 110px; border-right: 1px solid #d2d0ce; display: flex; flex-direction: column; justify-content: space-between; align-items: center; }
.group h6 { font-size: 11.6px; font-weight: 400; line-height: 16px; margin-bottom: -1px; letter-spacing: -.1px; }
.btns { display: flex; }
.btn { display: block; text-align: center; white-space: nowrap; padding-top: 3px; height: 90px; margin-top: 3px; letter-spacing: -.1px; }
.btn svg { width: 36px; height: 40px; margin: 0 auto 2px; }
.btn i { display: inline-block; width: 5px; height: 5px; border: solid #252423; border-width: 0 1.6px 1.6px 0; transform: rotate(45deg); margin: 0 2px 3px 4px; }
.off, .small { color: #c1bfbd; }
.off i { border-color: #b0aeac; }
.hot { background: #f3f2f1; }
.soft { opacity: .7; }
.clip { width: 201px; }
.clip .btns { width: 201px; padding-left: 18px; }
.clip .btn { width: 36px; margin-right: 12px; }
.small { margin-top: -1px; }
.small li { display: flex; align-items: center; height: 30px; gap: 5px; }
.small svg { width: 20px; height: 20px; }
.fold { position: absolute; right: 6px; bottom: 8px; width: 12px; height: 8px; fill: none; stroke: #3b3a39; stroke-width: 2; }

/* body */
main { flex: 1; display: flex; min-height: 0; }
.rail { width: 51px; border-right: 1px solid #e1dfdd; }
.rail div { height: 50px; display: flex; align-items: center; justify-content: center; }
.rail svg { width: 24px; height: 24px; margin-top: -1px; fill: none; stroke: #6b6967; stroke-width: 1.3; }
.rail text { font-size: 9px; font-weight: 600; fill: #605e5c; stroke: none; letter-spacing: -.2px; }
.rail .sel { border-left: 3px solid #117865; padding-right: 3px; }
.rail .sel svg { stroke: #252423; stroke-width: 1.6; }

.work { width: 1417px; display: grid; grid-template: 746px 44px / 1166px 251px; }
.canvas { padding-top: 45px; background:
  linear-gradient(90deg, #f3f0fd, #f5f7ff 45%, #eef3ff 75%, #ecdaf8) top / 100% 60px no-repeat,
  linear-gradient(90deg, #d8effe, #e7effd 40%, #eeedfc 75%, #f1ecfb) bottom / 100% 60px no-repeat; }
.page { height: 656px; background: #08104d; padding-top: 17px; box-shadow: 0 1px 8px rgba(0,0,0,.25); }
.page h1 { width: 565px; height: 44px; margin-left: 300px; background: #cbccda; border: solid #5f648c; border-width: 1px 0; color: #d9424f; font: 700 33px/42px "Liberation Serif", serif; letter-spacing: .73px; text-align: center; white-space: nowrap; text-decoration: underline; text-decoration-thickness: 3px; text-underline-offset: 2px; }
.visuals { display: flex; padding: 66px 0 0 23px; gap: 27px; }
.scatter { width: 872px; height: 486px; background: #c49f9a; border-radius: 3px; overflow: hidden; box-shadow: 0 0 0 1px #15122f, 2px 3px 6px 1px #252c60; }
.scatter h2 { height: 31px; background: #f2b3db; font-size: 11.5px; line-height: 40px; font-weight: 600; text-align: center; color: #111; }
.scatter text { font-size: 12px; fill: #6b605e; }
.scatter .lg text { font-size: 14.6px; font-weight: 700; fill: #605e5c; }
.scatter .axis-title { font-size: 16.2px; font-weight: 600; fill: #111; text-anchor: start; }
.slicer { width: 225px; height: 485px; background: #81a8da; outline: 1px solid #1a2440; box-shadow: 6px 6px 14px #141b44; position: relative; padding-left: 21px; }
.slicer h3 { height: 25px; font-size: 16.2px; font-weight: 600; line-height: 24px; color: #111; display: flex; justify-content: space-between; padding: 0 7px 0 0; }
.slicer h3 svg { width: 14px; height: 8px; margin-top: 6px; fill: none; stroke: #56606e; stroke-width: 1.2; }
.slicer li { height: 21.93px; line-height: 22px; font-size: 10.3px; letter-spacing: -.1px; color: #252d3a; display: flex; align-items: center; gap: 7.5px; }
.slicer li::before { content: ""; width: 11px; height: 11px; background: #222; margin-top: -1px; }
.thumb { position: absolute; right: 0; top: 25px; width: 7px; height: 95px; background: #888; }

.phead { height: 50px; display: flex; align-items: center; }
h4 { font-size: 18.5px; font-weight: 600; letter-spacing: -.05px; }
.dbl { width: 15px; height: 15px; margin-left: auto; margin-top: -3px; fill: none; stroke: #252423; stroke-width: 1.4; }
.filters { background: #fff; border-left: 1px solid #d2d0ce; font-size: 14.3px; }
.filters .phead { padding: 0 13px 0 14px; }
.funnel { width: 22px; height: 19px; margin-right: 8px; margin-top: -2px; fill: none; stroke: #252423; stroke-width: 1.8; }
.eye { width: 18px; height: 12px; margin: -5px 20px 0 auto; fill: none; stroke: #252423; stroke-width: 1.5; }
.eye + .dbl { margin-left: 0; }
.fsearch { width: 225px; height: 42px; margin: 7px 0 0 10px; border: 1px solid #a19f9d; border-radius: 2px; display: flex; align-items: center; padding-left: 13px; font-size: 15.6px; color: #3b3a39; }
.fsearch svg { width: 19px; height: 19px; margin: -3px 11px 0 0; }
.filters .fsearch + section { border-top: 1px solid #b3b1af; margin-top: 5px; padding-top: 21px; }
.filters section { padding: 0 10px; height: 122px; }
.filters .fsearch + section { height: 143px; }
.filters p { display: flex; justify-content: space-between; letter-spacing: -.1px; }
.filters em { font-style: normal; letter-spacing: 1px; width: 19px; }
.well { width: 230px; height: 57px; margin-top: 11px; border: 1px solid #c8c6c4; border-radius: 2px; text-align: center; line-height: 57px; }

.tabs { grid-column: 1 / 3; display: flex; font-size: 14px; line-height: 46px; }
.dev { width: 30px; margin: 8px 0 0 13px; height: 29px; border-bottom: 3px solid #117865; padding-left: 2px; }
.dev svg, .phone { width: 24px; height: 18px; fill: none; stroke: #484644; stroke-width: 1.5; }
.phone { width: 17px; height: 25px; margin: 6px 0 0 31px; }
.pl, .pr { border: 6px solid transparent; height: 0; margin-top: 15px; }
.pl { border-right: 6px solid #c0bebc; border-left: 0; margin-left: 26px; }
.pr { border-left: 6px solid #c0bebc; border-right: 0; margin-left: 22px; margin-right: 7px; }
.tab { width: 96px; background: #fff; border-right: 1px solid #c8c6c4; text-align: center; position: relative; }
.first { border-left: 1px solid #a19f9d; }
.cur { width: 97px; font-weight: 600; box-shadow: inset 0 -5px #117865; letter-spacing: -.1px; }
.tab u { position: absolute; right: 5px; top: -11px; font-size: 12px; text-decoration: none; }
.add { width: 49px; background: linear-gradient(#fff, #fff) 18px 19px / 14px 4px no-repeat, linear-gradient(#fff, #fff) 23px 14px / 4px 14px no-repeat, #117865; }

.viz { width: 227px; border-left: 1px solid #dcdad8; border-right: 1px solid #dcdad8; }
.viz .phead { padding: 0 10px; }
h5 { font-size: 14.2px; font-weight: 600; margin: -2px 0 0 10px; letter-spacing: -.15px; }
.modes { display: flex; gap: 48px; margin: 4px 0 0 10px; }
.tile { width: 40px; height: 40px; background: #d2d0ce; border-radius: 2px; }
.fmt { width: 32px; height: 32px; margin-top: 5px; fill: none; stroke: #252423; stroke-width: 1.5; }
.notch { width: 225px; margin: 6px 0 0; fill: none; stroke: #8a8886; }
.gallery { display: grid; grid-template-columns: repeat(6, 23px); gap: 12px; padding: 14px 0 11px 14px; border-bottom: 1px solid #dcdad8; }
.gallery svg { width: 23px; height: 23px; }
.fields { font-size: 14.3px; letter-spacing: -.05px; }
.fields label { display: block; margin: 11px 0 6px 15px; }
.dash { margin-left: 5px; width: 213px; background: #fff; border: 1px dashed #c0bebc; border-radius: 2px; white-space: nowrap; }
.dash.v { height: 35px; line-height: 34px; padding-left: 12px; }
.dash.d { height: 32px; line-height: 32px; padding-left: 10px; margin-top: 13px; letter-spacing: -.02px; }
.fields .sb { font-weight: 600; font-size: 14px; color: #55534f; margin: 14px 0 11px 15px; }
.row { display: flex; justify-content: space-between; align-items: center; padding: 0 27px 0 15px; height: 20px; }
.k2 { margin-top: 14px; }
.tg { width: 40px; height: 20px; border: 1px solid #8a8886; border-radius: 10px; background: #fff; color: #605e5c; font-size: 11px; display: flex; align-items: center; justify-content: center; gap: 2px; }
.tg i { width: 10px; height: 10px; border-radius: 5px; background: #605e5c; }
.yes { background: #117865; border-color: #117865; color: #fff; gap: 4px; }
.yes i { background: #fff; }

.data { flex: 1; color: #323130; }
.data .phead { padding: 0 10px; }
.dsearch { width: 214px; height: 31px; margin: 7px 0 10px 5px; background: #fff; border: 1px solid #d1d1d1; border-bottom-color: #616161; border-radius: 4px; display: flex; align-items: center; padding-left: 15px; font-size: 15.2px; color: #616161; }
.dsearch svg { width: 17px; height: 17px; margin-right: 9px; stroke: #616161; }
.data li { height: 30px; display: flex; align-items: center; padding-left: 20px; font-size: 14px; letter-spacing: -.1px; }
.ar { width: 8px; height: 13px; margin-right: 9px; fill: none; stroke: #605e5c; stroke-width: 1.3; }
.tb { width: 15px; height: 15px; margin-right: 7px; fill: none; stroke: #484644; stroke-width: 1.3; }

.status { height: 29px; flex: none; border-top: 1px solid #dcdad8; display: flex; align-items: center; color: #605e5c; font-size: 14px; }
.pg { margin: 3px auto 0 5px; color: #484644; font-size: 14.4px; letter-spacing: -.05px; }
.zoom { fill: none; stroke: #605e5c; margin-right: 17px; }
.pct { width: 53px; letter-spacing: -.2px; }
.fit { width: 20px; height: 16px; margin: 2px 22px 0 0; fill: none; stroke: #605e5c; stroke-width: 1.8; }
```
FILE: chart.js
```js
const NS = "http://www.w3.org/2000/svg";
const add = (parent, tag, attrs, text) => {
  const el = document.createElementNS(NS, tag);
  for (const k in attrs) el.setAttribute(k, attrs[k]);
  if (text) el.textContent = text;
  parent.appendChild(el);
  return el;
};

// legend: label, marker x, text x, text width, colour
const legend = document.getElementById("legend");
legend.setAttribute("class", "lg");
add(legend, "text", { x: 12, y: 52, textLength: 40 }, "Name");
[["A",64.5,72,9.5,"#118dff"],["AAL",93,100,28,"#12239e"],["AAP",139,146,29.5,"#e044a7"],["AAPL",186.5,194,36.5,"#6b007b"],
 ["ABBV",241.5,248.5,38.5,"#e66c37"],["ABC",297.5,305,28.5,"#744ec2"],["ABT",344.5,352,27.5,"#d9b300"],["ACN",390.3,397.5,31,"#d64550"],
 ["ADBE",439,446.5,37.5,"#3599b8"],["ADI",495,502.5,25,"#dfbfbf"],["ADM",539,546.5,34.5,"#4ac5bb"],["ADP",592,599.5,30,"#5f6b6d"],
 ["ADS",640,647.5,28.5,"#fb8281"],["ADSK",687,694.5,38.5,"#f4d25a"],["AEE",743.5,751,26,"#7f898a"],["AEP",787.5,795,27,"#a4ddee"]]
.forEach(([t, cx, tx, w, c]) => {
  add(legend, "circle", { cx, cy: 46.7, r: 4.7, fill: c });
  add(legend, "text", { x: tx, y: 52, textLength: w, lengthAdjust: "spacingAndGlyphs" }, t);
});

const grid = document.getElementById("grid");
[["0.2",71],["0.1",160.5],["0.0",249.7],["-0.1",339.3],["-0.2",428.3]].forEach(([t, y]) => {
  add(grid, "path", { d: `M42 ${y}H846`, stroke: "#4a3b3a", "stroke-width": 1.2, "stroke-dasharray": "1.3 3.24" });
  add(grid, "text", { x: 34, y: y + 4, "text-anchor": "end" }, t);
});
[["0.01",144],["0.02",345.4],["0.03",546.4],["0.04",747.6]].forEach(([t, x]) => {
  add(grid, "path", { d: `M${x} 73V429`, stroke: "#4a3b3a", "stroke-width": 1.2, "stroke-dasharray": "1.3 3.24" });
  add(grid, "text", { x, y: 445, "text-anchor": "middle" }, t);
});

const dots = document.getElementById("dots");
const dot = (cx, cy, fill) => add(dots, "circle", { cx, cy, r: 13.3, fill, opacity: .94 });

// dense core of the distribution
let s = 29;
const rnd = () => (s = (s * 16807) % 2147483647) / 2147483647;
const cols = "2f3538 4b4f4d 24402f 5a3a52 6b716b 7d6a78 2c6e49 4a7d70 96506d 3f2a4c 5b7a3a 8b5fa8 c04f4f 36454f 9a8f6a 7a4b2a 55705c 6f9ad0 c98fb8 7fb88a".split(" ");
for (let i = 0; i < 110; i++) {
  const a = rnd() * 6.283, r = Math.sqrt(rnd());
  dot(345 + Math.cos(a) * r * 215, 275 + Math.sin(a) * r * 84 + Math.cos(a) * r * 22, "#" + cols[Math.floor(rnd() * cols.length)]);
}

`368 22 70c4f2;918 62 7a55bb;1067 50 96b030;195 101 73804f;355 105 b95736;390 119 dcb8cd;429 112 44484f;458 117 b1677d;514 111 564c56;571 87 505b55;
780 88 207d3d;242 136 4a5549;283 130 d7505a;374 131 7c6a2a;358 131 785072;416 133 dcdcb8;448 138 6e5e61;573 131 8f9d96;585 119 d35a30;591 119 9c28a5;
700 136 ecd068;716 133 4f6218;1021 133 786868;167 163 7f7e88;227 157 918ea5;141 180 3c5e83;320 154 6b7a62;357 152 303b30;411 148 6aac80;426 158 6660f0;
463 165 4c3485;493 164 3a8cac;503 169 5250b8;557 151 7c3377;562 162 493b49;298 166 55b26e;260 172 a8667d;245 175 2c8447;228 190 f5a75b;283 196 3a1a24;
310 188 e291d2;323 180 647262;334 185 9b8a92;361 177 5a685c;390 183 5d6c61;453 194 67ad7c;488 195 77395f;560 185 fa74b4;657 175 51b5b5;722 178 b8d4b5;
800 192 3a2a5c;843 180 a985e3;158 199 3e267b;181 205 4c4390;99 210 7b52b8;100 233 6a7c6a;247 220 31122c;252 201 35513c;309 212 4b7425;360 208 b74546;
402 212 2a7a14;432 218 48bda8;414 224 a8e30a;458 220 b38ab0;500 212 a6cfc5;517 203 64ece8;541 206 5b7d50;531 222 a2aa4d;561 215 44b59b;594 222 b68d84;
637 217 dabcdd;668 243 64c0e8;702 243 545b58;751 228 b68690;801 219 604e50;821 233 3d6c85;846 234 95b340;77 256 ec12a0;133 266 414034;105 277 253a7a;
165 237 818b91;192 222 7d88f0;206 239 08219b;205 224 4de3b0;237 252 8eef93;265 245 8b4a15;276 233 2c6c8c;291 245 d96833;301 235 bb0bf0;323 240 f850a0;
347 233 2d3b33;349 255 12292a;374 250 29473a;393 237 809640;402 229 c4d471;397 262 148a7c;415 275 129248;423 247 29210f;436 244 dac1bb;448 237 a4dd8c;
469 233 601070;481 235 69e7d6;506 232 675149;483 261 88222c;460 279 74e5e8;489 272 f2a36e;436 266 15e8e0;456 254 4a9f4e;566 240 ab8cb3;578 234 69567a;
557 271 bb9425;573 274 73cf48;583 254 6b7c7b;622 256 79b5f5;643 265 b06b9a;612 266 4c5f58;699 270 5a4d51;723 272 251642;723 300 b3aa42;748 287 40403a;
779 295 c05094;819 261 c87851;855 291 525b5d;890 277 ebd05b;917 255 9a56b5;948 264 444350;954 281 9137a8;982 283 302c25;1028 281 5191c8;1014 277 b25832;
1056 298 bd5599;896 313 3a301e;923 310 2030a4;945 310 522051;935 308 4c6d7b;918 345 776677;1008 345 a5e1cf;1156 348 687269;973 369 f7ee75;1099 386 47452f;
138 300 3df005;113 310 453d41;127 314 a695b0;155 291 ef6f7d;157 323 442258;170 300 b03d92;183 316 81a86a;192 274 e67ad6;215 272 902d62;228 270 cf3c51;
237 289 74263b;262 272 9a5de9;258 294 f28d94;211 300 475853;287 275 ea5a72;312 282 aad3e1;329 295 68a5af;284 302 3c5c53;264 317 7a88e3;298 311 dd4caa;
310 306 0f9f43;309 328 20573c;345 290 1a3a9a;357 308 dcc880;373 303 dce783;380 291 3c4d40;423 290 4d535c;401 320 83f0b3;440 328 10251b;234 333 aa7fa2;
286 336 bb0c18;219 348 54802e;196 349 524456;183 359 85a07f;226 325 333a3a;339 345 bb5069;364 351 aaa267;389 337 2c3a35;405 341 88d2a5;428 354 445650;
387 362 5b474f;417 322 8b2cd0;479 317 92d397;487 298 32442a;471 306 37511c;452 318 5d6b42;511 315 56c552;524 298 57f080;503 279 747232;498 300 3f6c38;
493 289 7830b0;554 299 4a5240;562 306 505060;547 325 7e6ba5;536 336 3d315a;525 346 4a22a0;549 342 62ac08;540 352 86b048;578 321 5375dd;606 321 8d3a45;
597 292 3c433b;620 292 7a6332;638 300 d28ae0;640 312 6b0c89;617 329 202e24;670 310 25362d;680 292 146334;601 349 ee601d;621 359 bd7d48;630 373 855be7;
670 346 1b2f35;699 351 60e83e;717 347 5fe7cf;735 325 e49dad;783 323 c2e263;782 344 781d80;817 366 667664;840 351 6c8a3f;728 360 5452bc;686 367 893750;
705 378 523840;716 384 c73c81;678 394 d5b0dc;656 391 5610a8;622 394 a8918f;743 396 7966a2;723 400 d69ee3;691 411 59655a;770 380 664e25;771 366 78730e;
766 399 545537;783 407 7a58ae;773 415 9688a1;758 437 3f98ae;842 390 36866e;877 369 88c850;870 368 118df3;870 390 3088ad;881 405 30333e;941 394 9d9f85;
109 359 dc65ec;152 383 3e201f;198 377 66a596;258 374 393e79;281 362 60377c;321 379 83e5c7;348 376 722b4e;294 393 374178;227 411 3b7f4d;175 410 3f423b;
130 405 454548;364 404 4eb9a7;396 410 505056;417 394 66eacd;430 388 67795a;448 370 746689;473 362 b247b0;457 353 694286;516 363 4c6d87;538 368 68767d;
562 374 207a68;585 414 454a4c;467 415 c7f85d;442 427 7b8752;453 431 35b355;519 427 246099;594 445 205719;608 444 4a2687;630 451 565d8d;681 438 263a14;
271 452 22891b;297 446 c00d76;347 447 55815f;384 437 813c46;406 440 7ba56b;346 496 663125;369 533 2f2b2e;454 489 463a3f;487 496 f096a4;531 482 87b38e;
635 474 554a3c;641 493 b32a8b;442 547 335ab9;436 560 8e3076;635 537 69f0b0;686 556 26eb60;722 576 322e2d;783 467 8d4e1f;796 475 806078;805 505 7d8177;
795 515 375849;868 472 6299a8;876 445 bdbbdc;878 496 796e67;906 427 93a3e5;917 457 f079f1;948 456 6b6d76;959 443 6c287e;950 433 6f1950;973 507 423639;
1014 496 1e655d;1052 507 3a1c64;1087 486 cc60e8;1074 437 838c85;1110 448 f78480;1196 412 d8e0a0;1081 -120 3a2e30;1367 138 e39a85;1240 168 75697c;
1220 251 918c7e;1353 309 d4ad18;1849 275 823b3f;1506 359 4f7a6e;1583 366 b7953f;1223 458 996bf0;1628 511 57b555;1364 561 b5a51c;1293 595 8aef84;
1227 696 ee2346;1288 745 ef8762;1695 739 323d66;2083 927 b5a2da;701 -119 488565`.split(";").forEach(p => {
  const [x, y, c] = p.trim().split(" ");
  dot(x, y, "#" + c);
});
```
